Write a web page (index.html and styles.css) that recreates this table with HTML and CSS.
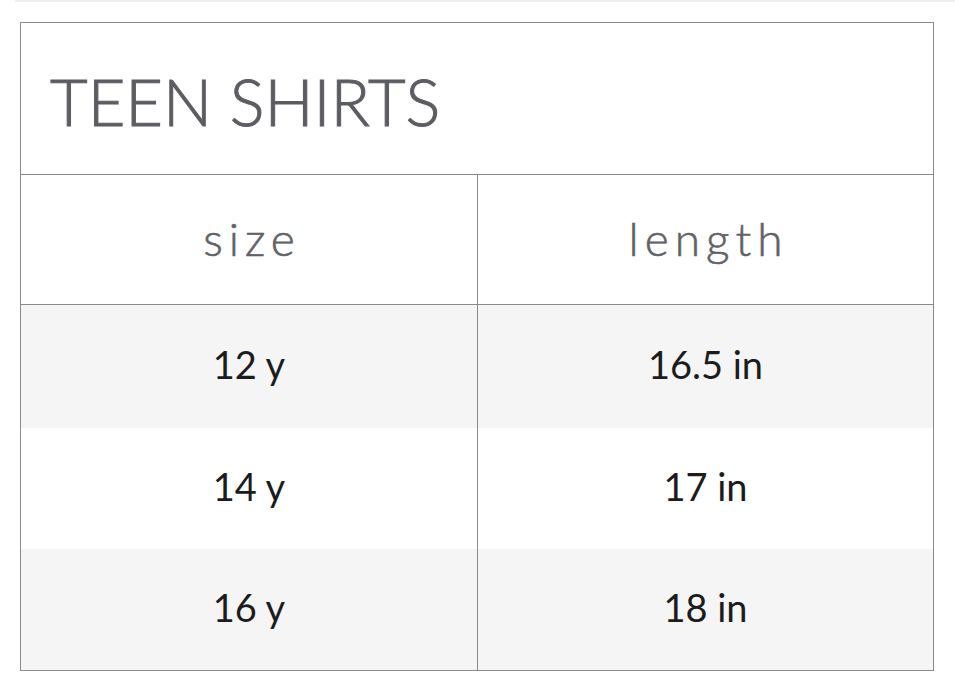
FILE: index.html
```html
<!DOCTYPE html>
<html>
<head>
<meta charset="utf-8">
<link rel="stylesheet" href="styles.css">
</head>
<body>
<div class="topline"></div>
<div class="chart">
  <div class="title">TEEN SHIRTS</div>
  <div class="cell head">size</div>
  <div class="cell head right">length</div>
  <div class="cell data shade">12 y</div>
  <div class="cell data shade right">16.5 in</div>
  <div class="cell data">14 y</div>
  <div class="cell data right">17 in</div>
  <div class="cell data shade last">16 y</div>
  <div class="cell data shade right last">18 in</div>
</div>
</body>
</html>
```
FILE: styles.css
```css
html, body {
  margin: 0;
  padding: 0;
  background: #fff;
}
body {
  font-family: Lato, "Open Sans", sans-serif;
  padding: 0 21px 0 20px;
}
.topline {
  height: 2px;
  margin-left: -5px;
  margin-right: -21px;
  background: #efefef;
}
.chart {
  margin-top: 20px;
  border: 1px solid #8a8a8a;
  display: grid;
  grid-template-columns: 456px 1fr;
  grid-template-rows: 152px 130px 123px 121px 121px;
}
.title {
  grid-column: 1 / 3;
  border-bottom: 1px solid #8a8a8a;
  display: flex;
  align-items: center;
  padding-left: 29px;
  padding-top: 4px;
  font-size: 65px;
  font-weight: 300;
  letter-spacing: 0;
  color: #5c5d62;
  -webkit-text-stroke: 1px #5c5d62;
}
.cell {
  display: flex;
  align-items: center;
  justify-content: center;
}
.right {
  border-left: 1px solid #8a8a8a;
}
.head {
  border-bottom: 1px solid #8a8a8a;
  font-size: 46px;
  font-weight: 300;
  letter-spacing: 0.13em;
  padding-left: 0.13em;
  color: #616266;
  -webkit-text-stroke: 0.6px #616266;
  padding-bottom: 2px;
}
.data {
  font-size: 38px;
  font-weight: 400;
  color: #1c1c1c;
  padding-bottom: 5px;
}
.shade {
  background: #f5f5f5;
}
```
